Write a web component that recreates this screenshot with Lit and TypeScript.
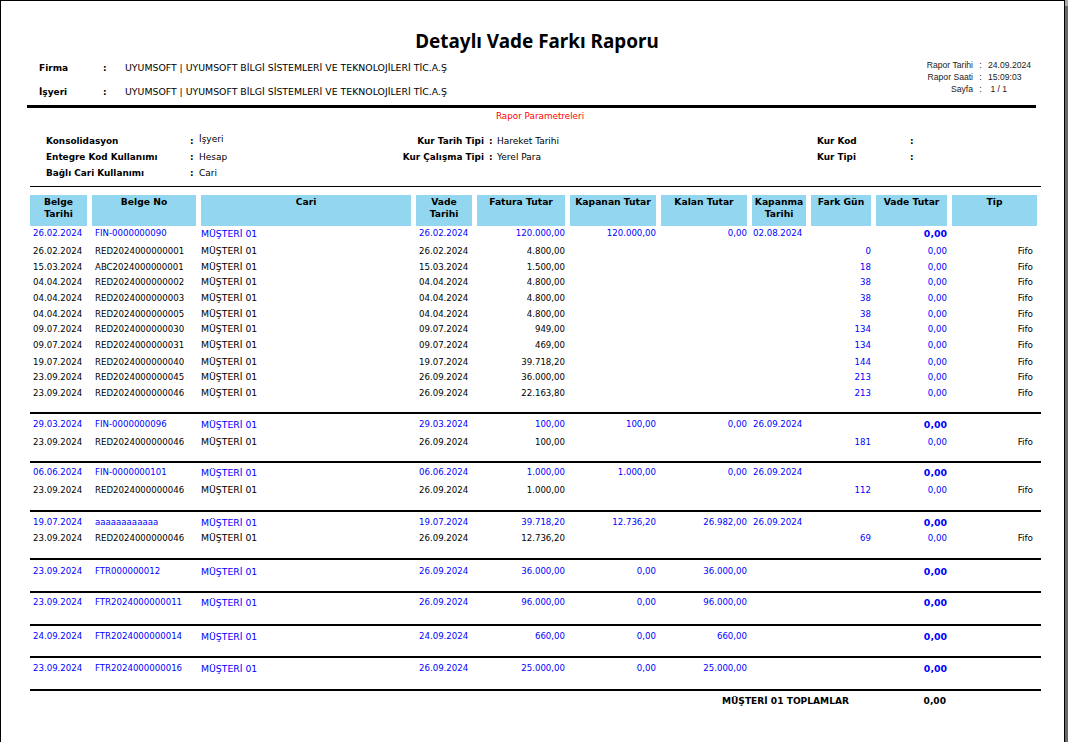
import {html, css, LitElement} from 'lit';
import {customElement} from 'lit/decorators.js';

const COLS = '62px 109px 215px 61px 93px 91px 91px 59px 65px 76px 85px';

const head = [
  ['Belge', 'Tarihi'], ['Belge No'], ['Cari'], ['Vade', 'Tarihi'], ['Fatura Tutar'], ['Kapanan Tutar'],
  ['Kalan Tutar'], ['Kapanma', 'Tarihi'], ['Fark Gün'], ['Vade Tutar'], ['Tip'],
];

// h: row height, pad: space above the text, blue: main document row, sep: rule above the row
type Row = {h: number; pad: number; blue?: boolean; sep?: number; c: string[]};

const main = (h: number, pad: number, sep: number, d: string, no: string, v: string, f: string, k: string, ka: string, t: string): Row => ({
  h, pad, sep, blue: true, c: [d, no, 'MÜŞTERİ 01', v, f, k, ka, t, '', '0,00', ''],
});
const sub = (h: number, d: string, no: string, v: string, f: string, g: string): Row => ({
  h, pad: 1, c: [d, no, 'MÜŞTERİ 01', v, f, '', '', '', g, '0,00', 'Fifo'],
});

const rows: Row[] = [
  main(18, 1, 0, '26.02.2024', 'FIN-0000000090', '26.02.2024', '120.000,00', '120.000,00', '0,00', '02.08.2024'),
  sub(16, '26.02.2024', 'RED2024000000001', '26.02.2024', '4.800,00', '0'),
  sub(15, '15.03.2024', 'ABC2024000000001', '15.03.2024', '1.500,00', '18'),
  sub(16, '04.04.2024', 'RED2024000000002', '04.04.2024', '4.800,00', '38'),
  sub(16, '04.04.2024', 'RED2024000000003', '04.04.2024', '4.800,00', '38'),
  sub(15, '04.04.2024', 'RED2024000000005', '04.04.2024', '4.800,00', '38'),
  sub(16, '09.07.2024', 'RED2024000000030', '09.07.2024', '949,00', '134'),
  sub(17, '09.07.2024', 'RED2024000000031', '09.07.2024', '469,00', '134'),
  sub(15, '19.07.2024', 'RED2024000000040', '19.07.2024', '39.718,20', '144'),
  sub(16, '23.09.2024', 'RED2024000000045', '26.09.2024', '36.000,00', '213'),
  sub(26, '23.09.2024', 'RED2024000000046', '26.09.2024', '22.163,80', '213'),
  main(21, 4, 2, '29.03.2024', 'FIN-0000000096', '29.03.2024', '100,00', '100,00', '0,00', '26.09.2024'),
  sub(26, '23.09.2024', 'RED2024000000046', '26.09.2024', '100,00', '181'),
  main(20, 3, 2, '06.06.2024', 'FIN-0000000101', '06.06.2024', '1.000,00', '1.000,00', '0,00', '26.09.2024'),
  sub(27, '23.09.2024', 'RED2024000000046', '26.09.2024', '1.000,00', '112'),
  main(19, 4, 2, '19.07.2024', 'aaaaaaaaaaaa', '19.07.2024', '39.718,20', '12.736,20', '26.982,00', '26.09.2024'),
  sub(27, '23.09.2024', 'RED2024000000046', '26.09.2024', '12.736,20', '69'),
  main(31, 5, 2, '23.09.2024', 'FTR000000012', '26.09.2024', '36.000,00', '0,00', '36.000,00', ''),
  main(31, 3, 2, '23.09.2024', 'FTR2024000000011', '26.09.2024', '96.000,00', '0,00', '96.000,00', ''),
  main(30, 4, 2, '24.09.2024', 'FTR2024000000014', '24.09.2024', '660,00', '0,00', '660,00', ''),
  main(31, 4, 2, '23.09.2024', 'FTR2024000000016', '26.09.2024', '25.000,00', '0,00', '25.000,00', ''),
];

const cellClass = ['date', 'no', 'cari', 'vade', 'r', 'r', 'r', 'kap', 'r gun', 'r vt', 'r tip'];

@customElement('app-root')
export class AppRoot extends LitElement {
  static styles = css`
    :host {
      display: block;
      width: 1068px;
      height: 742px;
      overflow: hidden;
      background: linear-gradient(#a9a9a9 6px, #696969 6px);
      font-family: 'DejaVu Sans', sans-serif;
      font-size: 8.6px;
      color: #000;
    }
    .page {
      box-sizing: border-box;
      width: 1065px;
      height: 742px;
      background: #fff;
      border-top: 1px solid #000;
      border-left: 1px solid #000;
      border-right: 1px solid #000;
      padding: 28px 0 0 27px;
    }
    h1 {
      margin: 0;
      width: 1018px;
      text-align: center;
      font-family: 'Noto Sans', sans-serif;
      font-size: 18.9px;
      line-height: 24px;
      font-weight: 700;
    }
    .top {
      display: flex;
      justify-content: space-between;
      width: 1003px;
      height: 46px;
    }
    .firma {
      display: grid;
      grid-template-columns: 64px 22px auto;
      grid-auto-rows: 24px;
      align-items: center;
      padding: 3px 0 0 11px;
      font-size: 9.35px;
    }
    .firma b {
      font-size: 9px;
    }
    .firma span {
      margin-top: -1px;
    }
    b {
      font-weight: 700;
    }
    .meta {
      display: grid;
      grid-template-columns: 46px 15px 43px;
      grid-auto-rows: 12px;
      margin-top: 6px;
      line-height: 12px;
      font-family: 'Liberation Sans', sans-serif;
      font-size: 8.6px;
      color: #222;
      white-space: nowrap;
    }
    .meta .k {
      display: flex;
      justify-content: flex-end;
    }
    .meta .c {
      text-align: center;
    }
    .thick {
      width: 1009px;
      height: 3px;
      margin: 6px 0 0 -1px;
      background: #000;
    }
    .param-title {
      text-align: center;
      width: 1024px;
      height: 24px;
      line-height: 16px;
      font-size: 8.8px;
      color: #f00;
    }
    .params {
      display: grid;
      grid-template-columns: 144px 9px 100px 190px 8px 320px 93px 10px;
      grid-auto-rows: 16px;
      align-items: center;
      padding: 1px 0 0 18px;
      height: 53px;
      font-size: 9px;
    }
    .params b {
      font-size: 8.9px;
    }
    .params .rt {
      grid-column: 4;
      text-align: right;
      padding-right: 5px;
    }
    .params .up {
      position: relative;
      top: -2px;
    }
    .thin {
      width: 1011px;
      height: 1px;
      margin: 0 0 8px 2px;
      background: #000;
    }
    .table {
      margin-left: 2px;
      width: 1011px;
    }
    .head,
    .row {
      display: grid;
      width: 1007px;
      grid-template-columns: var(--cols);
    }
    .th {
      box-sizing: border-box;
      height: 31px;
      margin-right: 5px;
      padding-top: 1px;
      background: #92d7ef;
      font-size: 9.2px;
      font-weight: 700;
      line-height: 12px;
      text-align: center;
    }
    .th:last-child {
      margin-right: 0;
    }
    .rule {
      width: 1011px;
      background: #000;
    }
    .row {
      box-sizing: border-box;
      line-height: 12px;
      align-items: start;
    }
    .td {
      white-space: nowrap;
    }
    .date,
    .no,
    .vade {
      padding-left: 3px;
    }
    .cari {
      font-size: 9.3px;
    }
    .kap {
      padding-left: 1px;
    }
    .r {
      text-align: right;
      padding-right: 5px;
    }
    .tip {
      padding-right: 4px;
      font-size: 8.8px;
    }
    .row.blue {
      color: #00f;
    }
    .row.blue .cari {
      padding-top: 1px;
    }
    .row.blue .vt {
      font-weight: 700;
      font-size: 9.4px;
      padding-top: 1px;
    }
    .gun,
    .vt {
      color: #00f;
    }
    .total {
      display: grid;
      grid-template-columns: 819px 97px;
      padding-top: 4px;
      line-height: 12px;
      font-size: 9.1px;
      font-weight: 700;
    }
    .total span {
      text-align: right;
    }
  `;

  renderRow(r: Row) {
    return html`
      ${r.sep ? html`<div class="rule" style="height:${r.sep}px"></div>` : ''}
      <div class="row ${r.blue ? 'blue' : ''}" style="height:${r.h}px;padding-top:${r.pad}px">
        ${r.c.map((c, i) => html`<div class="td ${cellClass[i]}">${c}</div>`)}
      </div>
    `;
  }

  render() {
    return html`
      <div class="page">
        <h1>Detaylı Vade Farkı Raporu</h1>
        <div class="top">
          <div class="firma">
            <b>Firma</b><b>:</b><span>UYUMSOFT | UYUMSOFT BİLGİ SİSTEMLERİ VE TEKNOLOJİLERİ TİC.A.Ş</span>
            <b>İşyeri</b><b>:</b><span>UYUMSOFT | UYUMSOFT BİLGİ SİSTEMLERİ VE TEKNOLOJİLERİ TİC.A.Ş</span>
          </div>
          <div class="meta">
            <span class="k">Rapor Tarihi</span><span class="c">:</span><span>24.09.2024</span>
            <span class="k">Rapor Saati</span><span class="c">:</span><span>15:09:03</span>
            <span class="k">Sayfa</span><span class="c">:</span><span>&nbsp;1 / 1</span>
          </div>
        </div>
        <div class="thick"></div>
        <div class="param-title">Rapor Parametreleri</div>
        <div class="params">
          <b>Konsolidasyon</b><b>:</b><span class="up">İşyeri</span>
          <b class="rt">Kur Tarih Tipi</b><b>:</b><span>Hareket Tarihi</span>
          <b>Kur Kod</b><b>:</b>
          <b>Entegre Kod Kullanımı</b><b>:</b><span>Hesap</span>
          <b class="rt">Kur Çalışma Tipi</b><b>:</b><span>Yerel Para</span>
          <b>Kur Tipi</b><b>:</b>
          <b>Bağlı Cari Kullanımı</b><b>:</b><span>Cari</span>
        </div>
        <div class="thin"></div>
        <div class="table" style="--cols:${COLS}">
          <div class="head">
            ${head.map(h => html`<div class="th">${h.map(l => html`<div>${l}</div>`)}</div>`)}
          </div>
          ${rows.map(r => this.renderRow(r))}
          <div class="rule" style="height:2px"></div>
          <div class="total"><span>MÜŞTERİ 01 TOPLAMLAR</span><span>0,00</span></div>
        </div>
      </div>
    `;
  }
}
